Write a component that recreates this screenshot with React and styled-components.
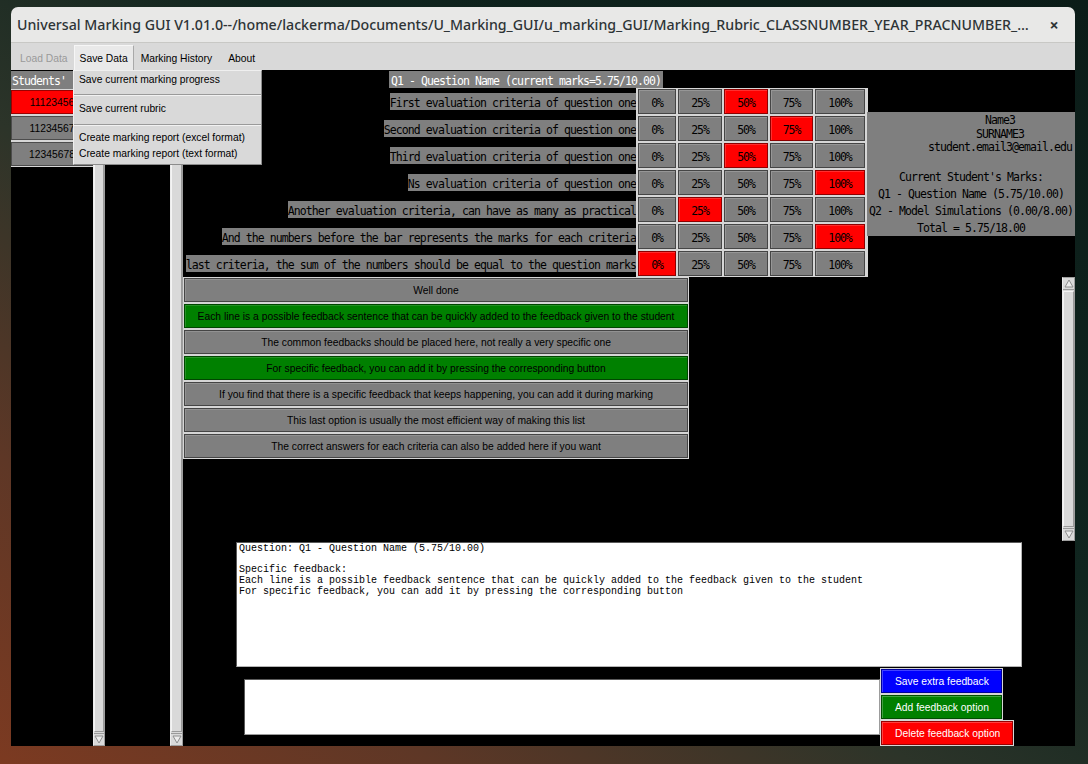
import React from 'react';
import styled, { createGlobalStyle } from 'styled-components';

const GREY = '#7f7f7f';
const LIGHT = '#d6d6d6';
const MONO = '"DejaVu Sans Mono", "Liberation Mono", monospace';
const SANS = '"Liberation Sans", Arial, sans-serif';

const Global = createGlobalStyle`
  html, body { margin: 0; padding: 0; }
  body { width: 1088px; height: 764px; overflow: hidden; font-family: ${SANS}; }
  * { box-sizing: border-box; }
`;

const Desktop = styled.div`
  width: 1088px;
  height: 764px;
  padding: 7px 13px 18px 11px;
  background: linear-gradient(to bottom left, #0b1c18 0%, #10251f 38%, #2c3429 58%, #5e3726 80%, #7c3a21 100%);
`;

const Window = styled.div`
  position: relative;
  height: 100%;
  display: flex;
  flex-direction: column;
`;

const TitleBar = styled.header`
  height: 36px;
  flex: none;
  display: flex;
  align-items: center;
  padding: 0 13px 0 6px;
  background: #e8e8e7;
  border-radius: 7px 7px 0 0;
  border-bottom: 1px solid #c8c8c5;
`;

const Title = styled.h1`
  flex: 1;
  min-width: 0;
  margin: 0;
  font: 500 14.2px "Noto Sans", "Open Sans", sans-serif;
  color: #2e3436;
  white-space: nowrap;
  overflow: hidden;
`;

const Close = styled.span`
  width: 16px;
  margin-left: 8px;
  text-align: center;
  font: 700 16px "Noto Sans", sans-serif;
  color: #2e3436;
`;

const MenuBar = styled.nav`
  height: 27px;
  flex: none;
  display: flex;
  align-items: stretch;
  padding-top: 2px;
  background: #d9d9d9;
`;

const MenuItem = styled.div`
  display: flex;
  align-items: center;
  padding: ${p => p.$pad};
  font: 10.3px ${SANS};
  color: ${p => (p.$disabled ? '#9a9a9a' : '#000')};
  background: ${p => (p.$active ? '#e9e9e9' : 'transparent')};
  border: 1px solid ${p => (p.$active ? '#a9a9a9' : 'transparent')};
  border-top-color: ${p => (p.$active ? '#f6f6f6' : 'transparent')};
  border-left-color: ${p => (p.$active ? '#f6f6f6' : 'transparent')};
  border-bottom: none;
`;

const Dropdown = styled.div`
  position: absolute;
  left: 62px;
  top: 63px;
  width: 189px;
  padding: 3px 0 0;
  background: #d9d9d9;
  border: 1px solid #8c8c8c;
  border-top-color: #efefef;
  border-left-color: #efefef;
  z-index: 5;
`;

const DropItem = styled.div`
  height: 16px;
  line-height: 16px;
  padding-left: 5px;
  font: 10.3px ${SANS};
  color: #000;
  white-space: nowrap;
`;

const DropDivider = styled.div`
  height: 2px;
  margin: ${p => p.$m};
  border-top: 1px solid #9a9a9a;
  border-bottom: 1px solid #f2f2f2;
`;

const Body = styled.div`
  flex: 1;
  min-height: 0;
  display: flex;
  background: #000;
`;

const Column = styled.div`
  width: ${p => p.$w}px;
  flex: none;
  display: flex;
  flex-direction: column;
`;

const monoText = `
  font-family: ${MONO};
  font-size: 11.5px;
  letter-spacing: -0.92px;
`;

const ColumnHeader = styled.div`
  height: 18px;
  margin-top: 1px;
  padding-left: 1px;
  line-height: 21px;
  background: ${GREY};
  color: #fff;
  ${monoText}
`;

const StudentList = styled.div`
  display: flex;
  flex-direction: column;
  gap: 2px;
  padding: 1px 0;
  background: ${LIGHT};
`;

const StudentButton = styled.div`
  height: 24px;
  display: flex;
  align-items: center;
  justify-content: center;
  white-space: nowrap;
  overflow: hidden;
  background: ${p => p.$color};
  border: 1px solid rgba(0, 0, 0, 0.4);
  font: 10.3px ${SANS};
  color: #000;
`;

const Scroll = styled.div`
  width: ${p => p.$w}px;
  height: ${p => (p.$h ? `${p.$h}px` : 'auto')};
  flex: none;
  display: flex;
  flex-direction: column;
  background: #d9d9d9;
  border: 1px solid #9e9e9e;
  border-left-color: #ececec;
`;

const ArrowBox = styled.div`
  height: 12px;
  flex: none;
  display: flex;
  align-items: center;
  justify-content: center;
  border-${p => (p.$up ? 'bottom' : 'top')}: 1px solid #9a9a9a;
`;

const Thumb = styled.div`
  flex: 1;
  margin: 1px 0;
  border: 1px solid #9a9a9a;
  border-top-color: #f4f4f4;
  border-left-color: #f4f4f4;
`;

const Main = styled.div`
  flex: 1;
  min-width: 0;
  display: flex;
  flex-direction: column;
`;

const TopSection = styled.section`
  height: 207px;
  flex: none;
  display: flex;
`;

const Rubric = styled.div`
  width: 684px;
  flex: none;
  display: flex;
  flex-direction: column;
`;

const QuestionHeader = styled.div`
  align-self: center;
  height: 17px;
  margin: 1px 0 0 2px;
  padding: 0 2px;
  line-height: 21px;
  background: ${GREY};
  color: #fff;
  white-space: nowrap;
  ${monoText}
`;

const CriteriaGrid = styled.div`
  display: grid;
  grid-template-columns: 453px 232px;
`;

const LabelCell = styled.div`
  height: 27px;
  display: flex;
  align-items: center;
  justify-content: flex-end;
`;

const CriteriaLabel = styled.span`
  height: 17px;
  line-height: 21px;
  background: ${GREY};
  color: #000;
  white-space: nowrap;
  ${monoText}
`;

const Levels = styled.div`
  height: 27px;
  display: flex;
  gap: 2px;
  padding: 1px 3px 1px 2px;
  background: ${LIGHT};
`;

const LevelButton = styled.div`
  width: ${p => p.$w}px;
  display: flex;
  align-items: center;
  justify-content: center;
  padding-top: 2px;
  background: ${p => (p.$on ? '#ff0000' : GREY)};
  border: 1px solid rgba(0, 0, 0, 0.45);
  box-shadow: inset 1px 1px 0 rgba(255, 255, 255, 0.18);
  color: #000;
  font-family: ${MONO};
  font-size: 11.5px;
  letter-spacing: -1.1px;
`;

const InfoPanel = styled.aside`
  width: 208px;
  height: 124px;
  margin-top: 42px;
  display: flex;
  flex-direction: column;
  padding-top: 2px;
  background: ${GREY};
  color: #000;
  ${monoText}
`;

const Identity = styled.div`
  align-self: flex-end;
  margin-right: 3px;
  text-align: center;
  line-height: 13.5px;
  white-space: pre;
`;

const Marks = styled.div`
  margin-top: 14px;
  text-align: center;
  line-height: 17px;
  white-space: pre;
`;

const FeedbackSection = styled.section`
  height: 264px;
  flex: none;
  display: flex;
  justify-content: space-between;
  align-items: flex-start;
`;

const FeedbackList = styled.div`
  width: 506px;
  display: flex;
  flex-direction: column;
  gap: 2px;
  padding: 1px;
  background: ${LIGHT};
`;

const FeedbackButton = styled.div`
  height: 24px;
  display: flex;
  align-items: center;
  justify-content: center;
  background: ${p => (p.$on ? '#008000' : GREY)};
  border: 1px solid rgba(0, 0, 0, 0.45);
  box-shadow: inset 1px 1px 0 rgba(255, 255, 255, 0.15);
  color: #000;
  font: 10.3px ${SANS};
  white-space: nowrap;
`;

const Summary = styled.div`
  width: 786px;
  height: 125px;
  margin: 1px 0 0 53px;
  flex: none;
  padding: 1px 2px 0;
  background: #fff;
  border: 1px solid #b5b5b5;
  border-top-color: #5a5a5a;
  border-left-color: #5a5a5a;
  color: #000;
  font: 10px "Liberation Mono", monospace;
  line-height: 10.7px;
  white-space: pre;
  overflow: hidden;
`;

const BottomRow = styled.div`
  flex: 1;
  display: flex;
  align-items: flex-start;
  padding-top: 1px;
`;

const ExtraInput = styled.div`
  width: 636px;
  height: 56px;
  margin: 11px 0 0 61px;
  background: #fff;
  border: 1px solid #9c9c9c;
  border-top-color: #5a5a5a;
  border-left-color: #5a5a5a;
`;

const Actions = styled.div`
  display: flex;
  flex-direction: column;
  align-items: flex-start;
`;

const ActionButton = styled.div`
  height: 26px;
  padding: 1px;
  background: ${LIGHT};
  display: flex;
`;

const ActionFace = styled.div`
  display: flex;
  align-items: center;
  padding: 0 12px 0 13px;
  background: ${p => p.$color};
  border: 1px solid rgba(0, 0, 0, 0.4);
  box-shadow: inset 1px 1px 0 rgba(255, 255, 255, 0.25);
  color: #fff;
  font: 10.3px ${SANS};
  white-space: nowrap;
`;

const Tri = ({ up }) => (
  <svg width="10" height="9" viewBox="0 0 10 9">
    <polygon
      points={up ? '1,8 5,1 9,8' : '1,1 5,8 9,1'}
      fill="#ececec"
      stroke="#8e8e8e"
      strokeWidth="1"
    />
  </svg>
);

const ScrollBar = ({ w, h }) => (
  <Scroll $w={w} $h={h}>
    <ArrowBox $up>
      <Tri up />
    </ArrowBox>
    <Thumb />
    <ArrowBox>
      <Tri />
    </ArrowBox>
  </Scroll>
);

const levels = ['0%', '25%', '50%', '75%', '100%'];
const levelWidths = [38, 44, 44, 43, 50];

const criteria = [
  { label: 'First evaluation criteria of question one', sel: 2 },
  { label: 'Second evaluation criteria of question one', sel: 3 },
  { label: 'Third evaluation criteria of question one', sel: 2 },
  { label: 'Ns evaluation criteria of question one', sel: 4 },
  { label: 'Another evaluation criteria, can have as many as practical', sel: 1 },
  { label: 'And the numbers before the bar represents the marks for each criteria', sel: 4 },
  { label: 'last criteria, the sum of the numbers should be equal to the question marks', sel: 0 },
];

const feedback = [
  ['Well done', false],
  ['Each line is a possible feedback sentence that can be quickly added to the feedback given to the student', true],
  ['The common feedbacks should be placed here, not really a very specific one', false],
  ['For specific feedback, you can add it by pressing the corresponding button', true],
  ['If you find that there is a specific feedback that keeps happening, you can add it during marking', false],
  ['This last option is usually the most efficient way of making this list', false],
  ['The correct answers for each criteria can also be added here if you want', false],
];

const students = [
  ['11123456', '#ff0000'],
  ['11234567', GREY],
  ['12345678', GREY],
];

const summaryText = `Question: Q1 - Question Name (5.75/10.00)

Specific feedback:
Each line is a possible feedback sentence that can be quickly added to the feedback given to the student
For specific feedback, you can add it by pressing the corresponding button`;

export default function App() {
  return (
    <>
      <Global />
      <Desktop>
        <Window>
          <TitleBar>
            <Title>
              Universal Marking GUI V1.01.0--/home/lackerma/Documents/U_Marking_GUI/u_marking_GUI/Marking_Rubric_CLASSNUMBER_YEAR_PRACNUMBER_…
            </Title>
            <Close>×</Close>
          </TitleBar>
          <MenuBar>
            <MenuItem $disabled $pad="0 5px 0 8px">Load Data</MenuItem>
            <MenuItem $active $pad="0 5px">Save Data</MenuItem>
            <MenuItem $pad="0 7px 0 6px">Marking History</MenuItem>
            <MenuItem $pad="0 7px">About</MenuItem>
          </MenuBar>
          <Body>
            <Column $w={82}>
              <ColumnHeader>Students'</ColumnHeader>
              <StudentList>
                {students.map(([id, c]) => (
                  <StudentButton key={id} $color={c}>{id}</StudentButton>
                ))}
              </StudentList>
            </Column>
            <ScrollBar w={12} />
            <Column $w={65} />
            <ScrollBar w={13} />
            <Main>
              <TopSection>
                <Rubric>
                  <QuestionHeader>Q1 - Question Name (current marks=5.75/10.00)</QuestionHeader>
                  <CriteriaGrid>
                    {criteria.map(c => (
                      <React.Fragment key={c.label}>
                        <LabelCell>
                          <CriteriaLabel>{c.label}</CriteriaLabel>
                        </LabelCell>
                        <Levels>
                          {levels.map((l, i) => (
                            <LevelButton key={l} $w={levelWidths[i]} $on={c.sel === i}>{l}</LevelButton>
                          ))}
                        </Levels>
                      </React.Fragment>
                    ))}
                  </CriteriaGrid>
                </Rubric>
                <InfoPanel>
                  <Identity>{'Name3\nSURNAME3\nstudent.email3@email.edu'}</Identity>
                  <Marks>
                    {"Current Student's Marks:\nQ1 - Question Name (5.75/10.00)\nQ2 - Model Simulations (0.00/8.00)\nTotal = 5.75/18.00"}
                  </Marks>
                </InfoPanel>
              </TopSection>
              <FeedbackSection>
                <FeedbackList>
                  {feedback.map(([t, on]) => (
                    <FeedbackButton key={t} $on={on}>{t}</FeedbackButton>
                  ))}
                </FeedbackList>
                <ScrollBar w={13} h={264} />
              </FeedbackSection>
              <Summary>{summaryText}</Summary>
              <BottomRow>
                <ExtraInput />
                <Actions>
                  <ActionButton><ActionFace $color="#0000ff">Save extra feedback</ActionFace></ActionButton>
                  <ActionButton><ActionFace $color="#008000">Add feedback option</ActionFace></ActionButton>
                  <ActionButton><ActionFace $color="#ff0000">Delete feedback option</ActionFace></ActionButton>
                </Actions>
              </BottomRow>
            </Main>
          </Body>
          <Dropdown>
            <DropItem>Save current marking progress</DropItem>
            <DropDivider $m="4px 0 7px" />
            <DropItem>Save current rubric</DropItem>
            <DropDivider $m="5px 0 6px" />
            <DropItem>Create marking report (excel format)</DropItem>
            <DropItem>Create marking report (text format)</DropItem>
          </Dropdown>
        </Window>
      </Desktop>
    </>
  );
}
